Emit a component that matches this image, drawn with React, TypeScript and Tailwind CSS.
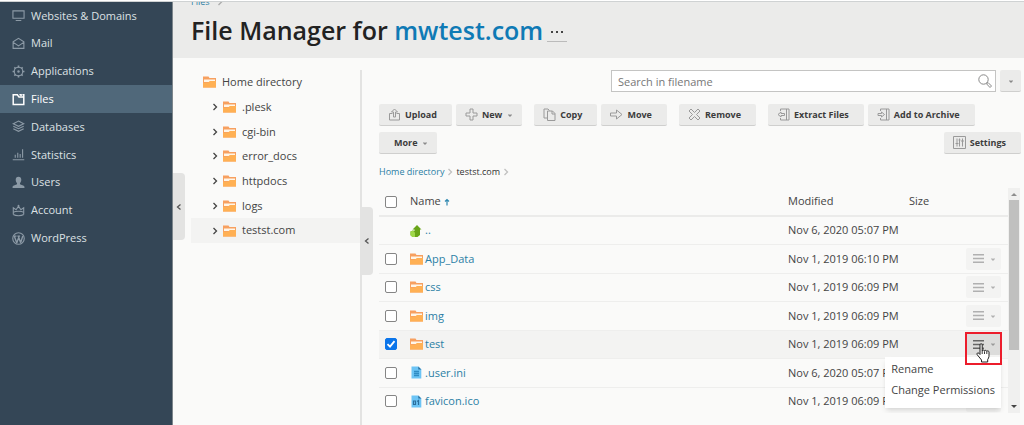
import type { ReactNode } from "react"

const stroke = {
  fill: "none",
  stroke: "currentColor",
  strokeWidth: 1.2,
} as const

const navItems: { label: string; active?: boolean; icon: ReactNode }[] = [
  {
    label: "Websites & Domains",
    icon: <path {...stroke} d="M1 2h12v8H1zM4 12.4h6" />,
  },
  {
    label: "Mail",
    icon: <path {...stroke} d="M1.2 5.2 7 1.4l5.8 3.8v7H1.2zM1.4 5.8 7 9.6l5.6-3.8" />,
  },
  {
    label: "Applications",
    icon: (
      <>
        <circle {...stroke} cx="7" cy="7" r="4.6" />
        <circle cx="7" cy="7" r="1.3" fill="currentColor" />
        <path {...stroke} strokeWidth={1.8} d="M7 .6v2M7 11.4v2M.6 7h2M11.4 7h2M2.5 2.5l1.3 1.3M10.2 10.2l1.3 1.3M2.5 11.5l1.3-1.3M10.2 3.8l1.3-1.3" />
      </>
    ),
  },
  {
    label: "Files",
    active: true,
    icon: <path {...stroke} strokeWidth={1.6} d="M1.3 2h4.5l1.700 2.400h5.200v7.900H1.300zM8 1.800h1.800v1.400M12.700 4.400V1.800h-1.500" />,
  },
  {
    label: "Databases",
    icon: <path {...stroke} d="M7 1.2 12.6 4 7 6.8 1.4 4zM1.4 6.6 7 9.4l5.6-2.8M1.4 9.4 7 12.2l5.6-2.8" />,
  },
  {
    label: "Statistics",
    icon: <path {...stroke} d="M.8 12.6h12.4M3.5 10.5V7.4M6.2 10.5V5M8.8 10.5V6.4M11.4 10.5V1.4" />,
  },
  {
    label: "Users",
    icon: <path fill="currentColor" d="M7 .8c2 0 3 1.3 3 3.200 0 1.800-.7 3-1.400 3.700v1.300l4 1.600c.5.2.8.6.8 1.200V13H.6v-1.200c0-.6.3-1 .8-1.200l4-1.600V7.700C4.700 7 4 5.800 4 4 4 2.100 5 .8 7 .8z" />,
  },
  {
    label: "Account",
    icon: (
      <>
        <path {...stroke} d="M1.400 11.400V4.200l3 2L7 2.400l2.600 3.800 3-2v7.200" />
        <path {...stroke} d="M1.400 8.800C4 7.400 10 7.400 12.600 8.800M1.400 11.400c2.600 1.700 8.600 1.700 11.200 0" />
        <circle cx="7" cy="1.800" r="1" fill="currentColor" />
      </>
    ),
  },
  {
    label: "WordPress",
    icon: (
      <>
        <circle {...stroke} cx="7" cy="7" r="6.200" />
        <path {...stroke} strokeWidth={1.500} d="M2.400 4.400 5.300 12M7 5l2.400 6.800M7.200 6 5 12M11.600 4.400 9.200 11.800M1.900 4.400h2.900M5.800 4.400h2.900" />
      </>
    ),
  },
]

const directories = [".plesk", "cgi-bin", "error_docs", "httpdocs", "logs", "testst.com"]

type FileKind = "up" | "folder" | "text" | "binary"

const files: { name: string; kind: FileKind; modified: string; selected?: boolean }[] = [
  { name: "..", kind: "up", modified: "Nov 6, 2020 05:07 PM" },
  { name: "App_Data", kind: "folder", modified: "Nov 1, 2019 06:10 PM" },
  { name: "css", kind: "folder", modified: "Nov 1, 2019 06:09 PM" },
  { name: "img", kind: "folder", modified: "Nov 1, 2019 06:09 PM" },
  { name: "test", kind: "folder", modified: "Nov 1, 2019 06:09 PM", selected: true },
  { name: ".user.ini", kind: "text", modified: "Nov 6, 2020 05:07 PM" },
  { name: "favicon.ico", kind: "binary", modified: "Nov 1, 2019 06:09 PM" },
]

function Chevron({ direction, className = "" }: { direction: "left" | "right" | "down"; className?: string }) {
  const paths = {
    left: "M5.500 1.500 2.500 4l3 2.500",
    right: "M2.500 1l3 3-3 3",
    down: "M2.500 3.500 4 5l1.500-1.500",
  }
  return (
    <svg viewBox="0 0 8 8" className={`size-2 shrink-0 ${className}`} aria-hidden="true">
      <path d={paths[direction]} fill="none" stroke="currentColor" strokeWidth="1.300" />
    </svg>
  )
}

function FolderIcon() {
  return (
    <svg viewBox="0 0 13 12" className="h-3 w-[13px] shrink-0" aria-hidden="true">
      <path d="M0 .5h5.500L6.500 2H13v9.500H0z" fill="#f7a060" />
      <path d="M1 3.500h11V6H1z" fill="#fff6e8" />
      <path d="M0 6.800h5L6.800 5H13v6.500H0z" fill="#ffb054" />
    </svg>
  )
}

function FileIcon({ kind }: { kind: FileKind }) {
  if (kind === "folder") return <FolderIcon />
  if (kind === "up") {
    return (
      <svg viewBox="0 0 13 12" className="h-3 w-[13px] shrink-0" aria-hidden="true">
        <path d="M7 0l4.500 4.500H10V10L7.500 12H2.500L.5 10V6.500L3 5.500l1.500.5V4.500H2.500z" fill="#69a519" />
        <path d="M.5 6.500 3 5.500l2 2V12H2.500L.5 10.500z" fill="#9fd84a" />
      </svg>
    )
  }
  return (
    <svg viewBox="0 0 13 13" className="size-[13px] shrink-0" aria-hidden="true">
      <path d="M1.500.5h6.800l3 3v9H1.500z" fill="#6cc4f5" />
      <path d="M8.300.5l3 3h-3z" fill="#2b6f9c" />
      {kind === "text" ? (
        <path d="M4 5.500h5M4 7.500h5M4 9.500h5" stroke="#2f8cc4" strokeWidth="1.500" />
      ) : (
        <path d="M3.500 6h2v3.500h-2zM7.200 6.500 8.500 5.500V10" fill="none" stroke="#2a6f9e" strokeWidth="1.200" />
      )}
    </svg>
  )
}

function ToolIcon({ children }: { children: ReactNode }) {
  return (
    <svg
      viewBox="0 0 13 13"
      className="size-[13px] shrink-0 text-[#9a9a9a]"
      fill="none"
      stroke="currentColor"
      aria-hidden="true"
    >
      {children}
    </svg>
  )
}

function ToolButton({ label, icon, menu }: { label: string; icon?: ReactNode; menu?: boolean }) {
  return (
    <button
      className={`flex h-[22px] items-center gap-1 rounded-xs border-b border-[#cfcfce] bg-[#ebebea] pl-[9px] text-[9px] font-bold whitespace-nowrap text-[#3c3c3c] ${
        menu ? "pr-2" : "pr-[15px]"
      }`}
    >
      {icon ? <ToolIcon>{icon}</ToolIcon> : <span className="w-0.5" />}
      {label}
      {menu && <Chevron direction="down" className="text-[#8a8a8a]" />}
    </button>
  )
}

function Sidebar() {
  return (
    <nav className="w-[173px] shrink-0 border-r border-[#7d868c] bg-[#344656]">
      <ul className="grid h-[250px] auto-rows-fr">
        {navItems.map((item) => (
          <li key={item.label}>
            <a
              href="#"
              className={`flex h-full items-center gap-1.5 pl-3 text-[11px] ${
                item.active ? "bg-[#50687a] text-white" : "text-[#dde1e4]"
              }`}
            >
              <svg
                viewBox="0 0 14 14"
                className={`size-[13px] shrink-0 ${item.active ? "text-white" : "text-[#8c9aa6]"}`}
                aria-hidden="true"
              >
                {item.icon}
              </svg>
              {item.label}
            </a>
          </li>
        ))}
      </ul>
    </nav>
  )
}

function DirectoryTree() {
  return (
    <aside className="relative w-[171px] shrink-0 border-r-2 border-[#e3e3e2]">
      <ul className="grid h-[173px] auto-rows-fr text-[11px] text-[#444]">
        <li className="flex items-center gap-1.5 pl-3">
          <FolderIcon />
          <a href="#">Home directory</a>
        </li>
        {directories.map((name) => (
          <li key={name} className={`flex items-center pl-5 ${name === "testst.com" ? "bg-[#f3f3f2]" : ""}`}>
            <button aria-label={`Expand ${name}`} className="mr-1">
              <Chevron direction="right" />
            </button>
            <a href="#" className="flex items-center gap-1.5">
              <FolderIcon />
              {name}
            </a>
          </li>
        ))}
      </ul>
      <button
        aria-label="Collapse tree"
        className="absolute top-[137px] -right-[13px] flex h-[68px] w-3 items-center justify-center rounded-r-sm bg-[#e3e3e2] text-[#555]"
      >
        <Chevron direction="left" />
      </button>
    </aside>
  )
}

function Toolbar() {
  return (
    <div className="mt-3 space-y-1.5">
      <div className="flex flex-wrap gap-x-3 gap-y-1.5">
        <div className="flex gap-1">
          <ToolButton label="Upload" icon={<path d="M4.500 5.500H1.500v6.500h10V5.500h-3M5.500 9V4H3.500l3-3 3 3h-2v5z" />} />
          <ToolButton label="New" menu icon={<path d="M5 1h3v4h4v3H8v4H5V8H1V5h4z" />} />
        </div>
        <div className="flex gap-1">
          <ToolButton
            label="Copy"
            icon={<path d="M4.500 10H1V1h4l1.500 1.500M4.500 3h5L12 5.500V12.500H4.500zM9 3v3h3" />}
          />
          <ToolButton label="Move" icon={<path d="M.5 5h6V2l5.500 4.500-5.500 4.500V8h-6z" />} />
        </div>
        <ToolButton
          label="Remove"
          icon={<path d="M1 3l2-2 3.500 3.500L10 1l2 2-3.500 3.500L12 10l-2 2-3.500-3.500L3 12l-2-2 3.500-3.500z" />}
        />
        <div className="flex gap-1">
          <ToolButton
            label="Extract Files"
            icon={<path d="M3.500 3V1H12v11H3.500v-2M9.500 1v11M7.500 5.500H4V4L1 6.500 4 9V7.500h3.500z" />}
          />
          <ToolButton
            label="Add to Archive"
            icon={<path d="M3.500 3V1H12v11H3.500v-2M9.500 1v11M1 5.500h3.500V4l3 2.500-3 2.500V7.500H1z" />}
          />
        </div>
      </div>
      <div className="flex justify-between">
        <ToolButton label="More" menu />
        <ToolButton
          label="Settings"
          icon={<path d="M.5.5h12v12H.5zM4 2.500v8M2.500 7.500h3M6.500 2.500v8M9.500 2.500v8M8 5h3M5.500 4h2" />}
        />
      </div>
    </div>
  )
}

function PointerHand() {
  return (
    <svg viewBox="0 0 16 20" className="pointer-events-none absolute top-2.5 left-2.5 h-5 w-4" aria-hidden="true">
      <path
        d="M4 1.800c0-1.400 2.200-1.400 2.200 0V8c0-1.300 2.300-1.300 2.300.2 0-1.200 2.300-1.100 2.300.4 0-1.100 2.200-1 2.200.5v4.200c0 1.400-.9 2.300-1.300 3.200V19H5.500v-2L1.200 11.700c-.9-1.200.6-2.500 1.800-1.400L4 11.500z"
        fill="#fff"
        stroke="#222"
        strokeWidth="1"
        strokeLinejoin="round"
      />
      <path d="M6.200 8v3M8.500 8.500V11M10.800 9v2" stroke="#222" strokeWidth=".9" />
    </svg>
  )
}

function RowMenu({ name, open }: { name: string; open?: boolean }) {
  return (
    <div className="relative h-[22px] w-[35px]">
      <button
        aria-label={`Actions for ${name}`}
        aria-expanded={!!open}
        className={`flex size-full items-center justify-between rounded-xs pr-1 pl-[7px] ${
          open ? "bg-[#dcdcdb] text-[#666]" : "bg-[#f3f3f2] text-[#b0b0b0]"
        }`}
      >
        <svg viewBox="0 0 11 9" className="h-[9px] w-[11px]" aria-hidden="true">
          <path d="M0 .7h11M0 4.500h11M0 8.300h11" stroke="currentColor" strokeWidth="1.400" />
        </svg>
        <Chevron direction="down" className={open ? "text-[#999]" : ""} />
      </button>
      {open && (
        <>
          <ul className="absolute top-full right-0 z-10 mt-0.5 bg-white px-1.5 pt-px pb-2 text-[11px] whitespace-nowrap text-[#444] shadow-md">
            <li>
              <button className="block h-[21px]">Rename</button>
            </li>
            <li>
              <button className="block h-[21px]">Change Permissions</button>
            </li>
          </ul>
          <div className="absolute -inset-x-px -top-px z-20 h-[33px] border-2 border-[#ec1c2b]" />
          <div className="absolute inset-0 z-20">
            <PointerHand />
          </div>
        </>
      )}
    </div>
  )
}

const checkbox =
  "block size-3 appearance-none rounded-xs border border-[#858585] bg-white checked:border-[#0b75ea] checked:bg-[#0b75ea]"

function FileTable() {
  return (
    <div className="mt-2 flex h-[225px] overflow-hidden">
      <table className="h-[228px] min-w-0 flex-1 border-collapse text-left text-[11px] text-[#444]">
        <thead>
          <tr className="h-7 border-b-2 border-[#ebebea]">
            <th className="w-[31px] p-0 pl-1.5">
              <input type="checkbox" aria-label="Select all" className={checkbox} />
            </th>
            <th className="p-0 font-normal">
              <button className="flex items-center gap-0.5">
                Name
                <svg viewBox="0 0 8 8" className="size-2 text-[#2f88b0]" aria-hidden="true">
                  <path d="M4 7.500v-6M2 3.500l2-2 2 2" fill="none" stroke="currentColor" strokeWidth="1.200" />
                </svg>
              </button>
            </th>
            <th className="w-[121px] p-0 font-normal">Modified</th>
            <th className="w-[57px] p-0 font-normal">Size</th>
            <th className="w-[42px] p-0" />
          </tr>
        </thead>
        <tbody>
          {files.map((file) => (
            <tr key={file.name} className={`h-7 border-b border-[#eeeeed] ${file.selected ? "bg-[#f3f3f2]" : ""}`}>
              <td className="p-0 pl-1.5">
                {file.kind !== "up" && (
                  <span className="relative block size-3">
                    <input
                      type="checkbox"
                      aria-label={`Select ${file.name}`}
                      defaultChecked={file.selected}
                      className={checkbox}
                    />
                    {file.selected && (
                      <svg viewBox="0 0 12 12" className="pointer-events-none absolute inset-0" aria-hidden="true">
                        <path d="M2.500 6.200 5 8.600l4.500-5.400" fill="none" stroke="#fff" strokeWidth="1.800" />
                      </svg>
                    )}
                  </span>
                )}
              </td>
              <td className="p-0">
                <a href="#" className="flex items-center gap-0.5 text-[#2b7fa5]">
                  <FileIcon kind={file.kind} />
                  {file.name}
                </a>
              </td>
              <td className="p-0 whitespace-nowrap">{file.modified}</td>
              <td className="p-0" />
              <td className="p-0">{file.kind !== "up" && <RowMenu name={file.name} open={file.selected} />}</td>
            </tr>
          ))}
        </tbody>
      </table>
      {/* Scrollbar */}
      <div className="mr-px flex w-3 shrink-0 flex-col items-center bg-[#f0f0ef]">
        <svg viewBox="0 0 12 12" className="size-3" aria-hidden="true">
          <path d="M3 8l3-3 3 3z" fill="#8d8d8d" />
        </svg>
        <div className="h-[150px] w-2.5 bg-[#c0c0bf]" />
        <svg viewBox="0 0 12 12" className="mt-auto size-3" aria-hidden="true">
          <path d="M3 4l3 3 3-3z" fill="#444" />
        </svg>
      </div>
    </div>
  )
}

export default function App() {
  return (
    <div className="flex min-h-screen flex-col bg-[#fafaf9] font-['Open_Sans',sans-serif]">
      <div className="h-0.5 border-b border-[#cfd2d3] bg-white" />
      <div className="flex flex-1">
        <Sidebar />
        <main className="relative flex min-w-0 flex-1 flex-col">
          <button
            aria-label="Collapse sidebar"
            className="absolute top-[171px] left-0 flex h-[67px] w-3 items-center justify-center rounded-r-sm bg-[#e3e3e2] text-[#555]"
          >
            <Chevron direction="left" />
          </button>

          {/* Page header */}
          <header className="h-14 overflow-hidden bg-[#ebebea] pl-[18px]">
            <div className="-mt-2 flex h-4 items-center gap-1.5 text-[9px] text-[#2b7fa5]">
              <a href="#">Files</a>
              <Chevron direction="right" className="text-[#aaa]" />
            </div>
            <div className="flex items-center gap-1 pt-0.5">
              <h1 className="text-[25px] leading-9 font-semibold text-[#222]">
                File Manager for{" "}
                <a href="#" className="text-[#0f7ab5]">
                  mwtest.com
                </a>
              </h1>
              <button
                aria-label="More actions"
                className="mt-1 flex h-5 w-5 items-center justify-center border-b border-[#bbb]"
              >
                <svg viewBox="0 0 12 4" className="h-1 w-3" aria-hidden="true">
                  <path d="M0 1h2v2H0zM5 1h2v2H5zM10 1h2v2h-2z" fill="#444" />
                </svg>
              </button>
            </div>
          </header>

          <div className="flex flex-1 pt-3 pr-[3px] pl-[18px]">
            <DirectoryTree />
            <section className="min-w-0 flex-1 pl-[17px]">
              {/* Search */}
              <div className="flex justify-end gap-1">
                <div className="relative w-[385px]">
                  <input
                    type="text"
                    aria-label="Search in filename"
                    placeholder="Search in filename"
                    className="block h-[22px] w-full border border-[#c4c4c3] bg-white pr-6 pl-1.5 text-[11px] placeholder:text-[#777]"
                  />
                  <svg viewBox="0 0 14 14" className="absolute top-1 right-1 size-[14px] text-[#888]" aria-hidden="true">
                    <circle cx="5.500" cy="5.500" r="4.700" fill="none" stroke="currentColor" />
                    <path d="M9 9l1-.5 3.500 3.500-1.500 1.500L8.700 10z" fill="none" stroke="currentColor" />
                  </svg>
                </div>
                <button
                  aria-label="Search options"
                  className="flex h-[22px] w-[21px] items-center justify-center rounded-xs border-b border-[#cfcfce] bg-[#ebebea] text-[#888]"
                >
                  <Chevron direction="down" />
                </button>
              </div>

              <Toolbar />

              <div className="mt-2.5 flex h-4 items-center gap-0.5 text-[9px]">
                <a href="#" className="text-[#2b7fa5]">
                  Home directory
                </a>
                <Chevron direction="right" className="text-[#c0c0c0]" />
                <span className="text-[#333]">testst.com</span>
                <Chevron direction="right" className="text-[#c0c0c0]" />
              </div>

              <FileTable />
            </section>
          </div>
        </main>
      </div>
    </div>
  )
}
